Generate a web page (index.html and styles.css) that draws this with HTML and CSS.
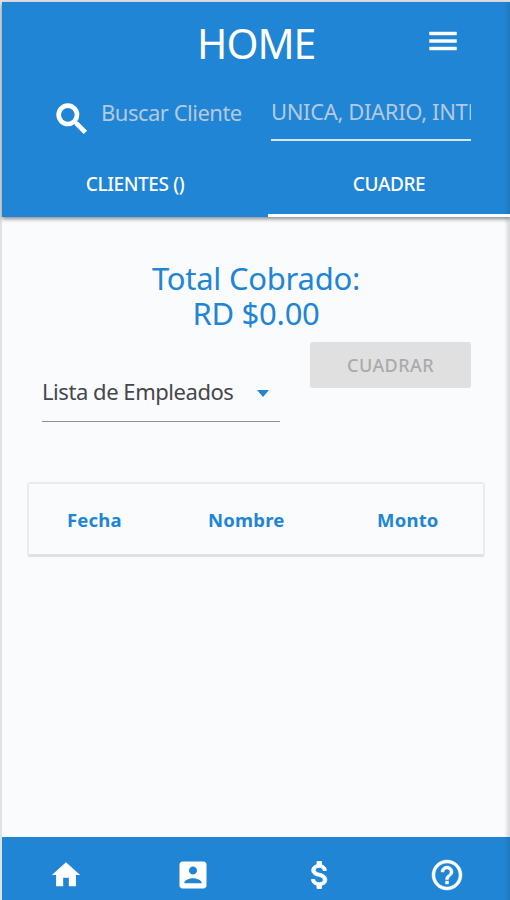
FILE: index.html
```
<!DOCTYPE html>
<html lang="es">
<head>
    <meta charset="UTF-8">
    <meta name="viewport" content="width=device-width, initial-scale=1.0">
    <title>Home</title>
    <link rel="stylesheet" href="styles.css">
</head>
<body>
    <div class="app">
        <header class="header">
            <div class="title-bar">
                <h1>HOME</h1>
                <button class="menu-btn" type="button" aria-label="Menu">
                    <svg viewBox="0 0 24 24"><path d="M3 18h18v-2H3v2zm0-5h18v-2H3v2zm0-7v2h18V6H3z"/></svg>
                </button>
            </div>

            <div class="search-row">
                <svg class="search-icon" viewBox="0 0 24 24"><path d="M15.5 14h-.79l-.28-.27C15.41 12.59 16 11.11 16 9.5 16 5.91 13.09 3 9.5 3S3 5.91 3 9.5 5.91 16 9.5 16c1.61 0 3.09-.59 4.23-1.57l.27.28v.79l5 4.99L20.49 19l-4.99-5zm-6 0C7.01 14 5 11.99 5 9.5S7.01 5 9.5 5 14 7.01 14 9.5 11.99 14 9.5 14z"/></svg>
                <div class="search-input">Buscar Cliente</div>
                <div class="type-input">UNICA, DIARIO, INTE</div>
            </div>

            <div class="tabs">
                <div class="tab"><span>CLIENTES ()</span></div>
                <div class="tab active"><span>CUADRE</span></div>
            </div>
        </header>

        <main class="content">
            <div class="total">Total Cobrado:<br>RD $0.00</div>

            <div class="actions">
                <div class="select">
                    <span>Lista de Empleados</span>
                    <i class="caret"></i>
                </div>
                <button class="cuadrar" type="button" disabled>CUADRAR</button>
            </div>

            <div class="table-head">
                <div class="fecha">Fecha</div>
                <div class="nombre">Nombre</div>
                <div class="monto">Monto</div>
            </div>
        </main>

        <nav class="bottom-nav">
            <svg class="home" viewBox="0 0 24 24"><path d="M10 20v-6h4v6h5v-8h3L12 3 2 12h3v8z"/></svg>
            <svg viewBox="0 0 24 24"><path d="M3 5v14c0 1.100.89 2 2 2h14c1.100 0 2-.9 2-2V5c0-1.100-.9-2-2-2H5c-1.110 0-2 .9-2 2zm11.700 4c0 1.500-1.200 2.700-2.700 2.700s-2.700-1.200-2.700-2.700 1.200-2.700 2.700-2.700 2.700 1.200 2.700 2.700zm-8.500 8.200c0-2 3.800-3.100 5.800-3.100s5.800 1.100 5.800 3.100v.3H6.200v-.3z"/></svg>
            <svg class="bold" viewBox="0 0 24 24"><path d="M11.800 10.900c-2.270-.59-3-1.200-3-2.150 0-1.090 1.010-1.850 2.700-1.850 1.780 0 2.440.85 2.500 2.100h2.210c-.07-1.720-1.120-3.300-3.210-3.810V3h-3v2.160c-1.940.42-3.500 1.680-3.500 3.610 0 2.310 1.910 3.460 4.700 4.130 2.500.6 3 1.480 3 2.410 0 .69-.49 1.790-2.700 1.790-2.060 0-2.870-.92-2.980-2.100h-2.200c.12 2.190 1.760 3.420 3.680 3.830V21h3v-2.150c1.950-.37 3.500-1.500 3.500-3.550 0-2.840-2.430-3.810-4.700-4.400z"/></svg>
            <svg class="help" viewBox="0 0 24 24"><path d="M11 18h2v-2h-2v2zm1-16C6.480 2 2 6.480 2 12s4.480 10 10 10 10-4.480 10-10S17.520 2 12 2zm0 18c-4.410 0-8-3.590-8-8s3.590-8 8-8 8 3.590 8 8-3.590 8-8 8zm0-14c-2.210 0-4 1.790-4 4h2c0-1.100.9-2 2-2s2 .9 2 2c0 2-3 1.750-3 5h2c0-2.250 3-2.500 3-5 0-2.210-1.790-4-4-4z"/></svg>
        </nav>
    </div>
</body>
</html>
```
FILE: styles.css
```
* {
    box-sizing: border-box;
}
body {
    margin: 0;
    font-family: "Noto Sans", "Open Sans", sans-serif;
    background-color: #dfe3e8;
}
svg {
    display: block;
    fill: white;
}
.app {
    display: flex;
    flex-direction: column;
    height: 900px;
    padding: 2px 0 0 2px;
    overflow: hidden;
}
.header {
    height: 215px;
    background: linear-gradient(to right, #2185d5 502px, #1e78c0 508px);
    color: white;
    box-shadow: 0 2px 4px rgba(0,0,0,0.45);
    z-index: 1;
}
.title-bar {
    display: grid;
    grid-template-columns: 1fr 118px 1fr;
    align-items: center;
    height: 82px;
}
h1 {
    grid-column: 2;
    margin: 0;
    font-size: 41px;
    font-weight: 400;
    line-height: 82px;
    letter-spacing: -1px;
    white-space: nowrap;
}
.menu-btn {
    justify-self: end;
    width: 36px;
    height: 36px;
    margin: -4px 49px 0 0;
    padding: 0;
    border: none;
    background: none;
}
.menu-btn svg {
    stroke: white;
    stroke-width: 0.3;
}
.search-row {
    display: flex;
    height: 66px;
    padding-left: 50px;
    color: #b4c9dd;
    font-size: 22px;
    line-height: 30px;
    white-space: nowrap;
}
.search-icon {
    width: 40px;
    height: 40px;
    margin-top: 15px;
    stroke: white;
    stroke-width: 0.8;
}
.search-input {
    width: 179px;
    padding: 13px 0 0 9px;
    letter-spacing: -0.5px;
}
.type-input {
    width: 200px;
    height: 57px;
    padding-top: 12px;
    border-bottom: 2px solid #d6e8f7;
    letter-spacing: -0.36px;
    overflow: hidden;
}
.tabs {
    display: flex;
    height: 67px;
}
.tab {
    display: flex;
    justify-content: center;
    width: 266px;
    padding-top: 21px;
    font-size: 19px;
    font-weight: 500;
    line-height: 26px;
    letter-spacing: -0.4px;
}
.tab.active {
    width: 242px;
    border-bottom: 3px solid #fafcff;
}
.content {
    flex: 1;
    padding: 44px 0 0;
    background: linear-gradient(to right, #fafbfd 502px, #d3d6da 508px);
}
.total {
    color: #2185d5;
    font-size: 31px;
    line-height: 35px;
    letter-spacing: -0.25px;
    text-align: center;
}
.actions {
    display: flex;
    justify-content: space-between;
    padding: 11px 39px 0 40px;
}
.select {
    display: flex;
    justify-content: space-between;
    width: 238px;
    height: 80px;
    padding: 34px 11px 0 0;
    border-bottom: 1px solid #8e8f91;
    color: #45474b;
    font-size: 22px;
    line-height: 30px;
    letter-spacing: -0.45px;
    white-space: nowrap;
}
.caret {
    width: 0;
    height: 0;
    margin-top: 14px;
    border: 6px solid transparent;
    border-top: 7px solid #2185d5;
    border-bottom: none;
}
.cuadrar {
    width: 161px;
    height: 46px;
    border: none;
    border-radius: 3px;
    background-color: #e0e0e0;
    color: #a9aaab;
    font-family: inherit;
    font-size: 18px;
    font-weight: 500;
    letter-spacing: 0.4px;
}
.table-head {
    display: flex;
    width: 458px;
    height: 75px;
    margin: 60px 0 0 25px;
    border: 2px solid #ebecee;
    border-bottom: 3px solid #dfe1e3;
    border-radius: 3px;
    color: #2185d5;
    font-size: 18.5px;
    font-weight: 700;
    line-height: 71px;
    letter-spacing: 0.2px;
}
.fecha {
    width: 141px;
    padding-left: 38px;
}
.nombre {
    width: 169px;
    padding-left: 38px;
}
.monto {
    padding-left: 38px;
}
.bottom-nav {
    display: grid;
    grid-template-columns: repeat(4, 1fr);
    justify-items: center;
    height: 63px;
    padding-top: 20px;
    background: linear-gradient(to right, #2185d5 502px, #1e78c0 508px);
}
.bottom-nav svg {
    width: 36px;
    height: 36px;
}
.bottom-nav .home {
    width: 34px;
    height: 34px;
    margin-top: 1px;
}
.bottom-nav .bold {
    stroke: white;
    stroke-width: 0.6;
}
.bottom-nav .help {
    stroke: white;
    stroke-width: 0.3;
}
```
